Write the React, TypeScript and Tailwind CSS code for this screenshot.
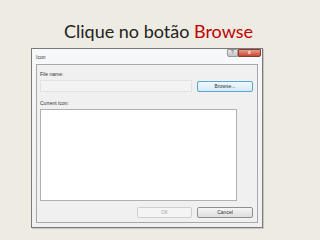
import React from "react";

export default function App() {
  const ui = { fontFamily: '"Liberation Sans", Arial, sans-serif' };
  return (
    <div className="w-[320px] h-[240px] bg-[#eeebe2] overflow-hidden relative">
      <div
        className="h-[48px] flex items-center justify-center pt-[14px] text-[18px] leading-none text-[#222] pr-[3px]"
        style={{ fontFamily: 'Lato, "Open Sans", sans-serif' }}
      >
        <span>
          Clique no botão <span className="text-[#c00000]">Browse</span>
        </span>
      </div>
      <div
        className="ml-[31px] w-[232px] h-[180px] border border-[#7a7a7a] bg-gradient-to-b from-[#f7f8f9] to-[#eef0f2] flex flex-col px-[4px] pb-[4px] shadow-[1px_1px_0_#c8c6be]"
        style={ui}
      >
        <div className="h-[15px] flex items-start justify-between">
          <span className="text-[5px] text-[#333] mt-[5px]">Icon</span>
          <div className="flex -mr-[3px]">
            <div className="w-[11px] h-[8px] bg-gradient-to-b from-[#e8e8e8] to-[#c4c4c4] border border-[#9a9a9a] rounded-bl-[2px] flex items-center justify-center text-[5px] text-[#555]">?</div>
            <div className="w-[23px] h-[8px] bg-gradient-to-b from-[#e49a8a] to-[#c6452f] border border-[#8a3b30] rounded-br-[2px] flex items-center justify-center text-[5px] text-white font-bold">x</div>
          </div>
        </div>
        <div className="flex-1 border border-[#a8a8a8] bg-[#f0f0f0] flex flex-col pl-[3px] pr-[4px]">
          <span className="text-[5px] text-[#333] mt-[7px] leading-none">File name:</span>
          <div className="flex items-center gap-[5px] mt-[3px]">
            <div className="w-[152px] h-[12px] border border-[#e2e2e2] bg-[#f3f3f3]" />
            <div className="w-[56px] h-[11px] border border-[#5ba4d4] rounded-[2px] bg-gradient-to-b from-[#f0f8fd] to-[#d6ebf8] flex items-center justify-center text-[5px] text-[#333] mt-[1px]">
              Browse...
            </div>
          </div>
          <span className="text-[5px] text-[#333] mt-[9px] leading-none">Current icon:</span>
          <div className="w-[197px] h-[92px] mt-[3px] border border-[#b0b0b0] bg-white" />
          <div className="flex justify-end gap-[5px] mt-[6px]">
            <div className="w-[55px] h-[11px] border border-[#cfcfcf] rounded-[2px] bg-[#f4f4f4] flex items-center justify-center text-[5px] text-[#aaa]">OK</div>
            <div className="w-[56px] h-[11px] border border-[#8e8e8e] rounded-[2px] bg-gradient-to-b from-[#f6f6f6] to-[#dedede] flex items-center justify-center text-[5px] text-[#333]">Cancel</div>
          </div>
        </div>
      </div>
    </div>
  );
}
